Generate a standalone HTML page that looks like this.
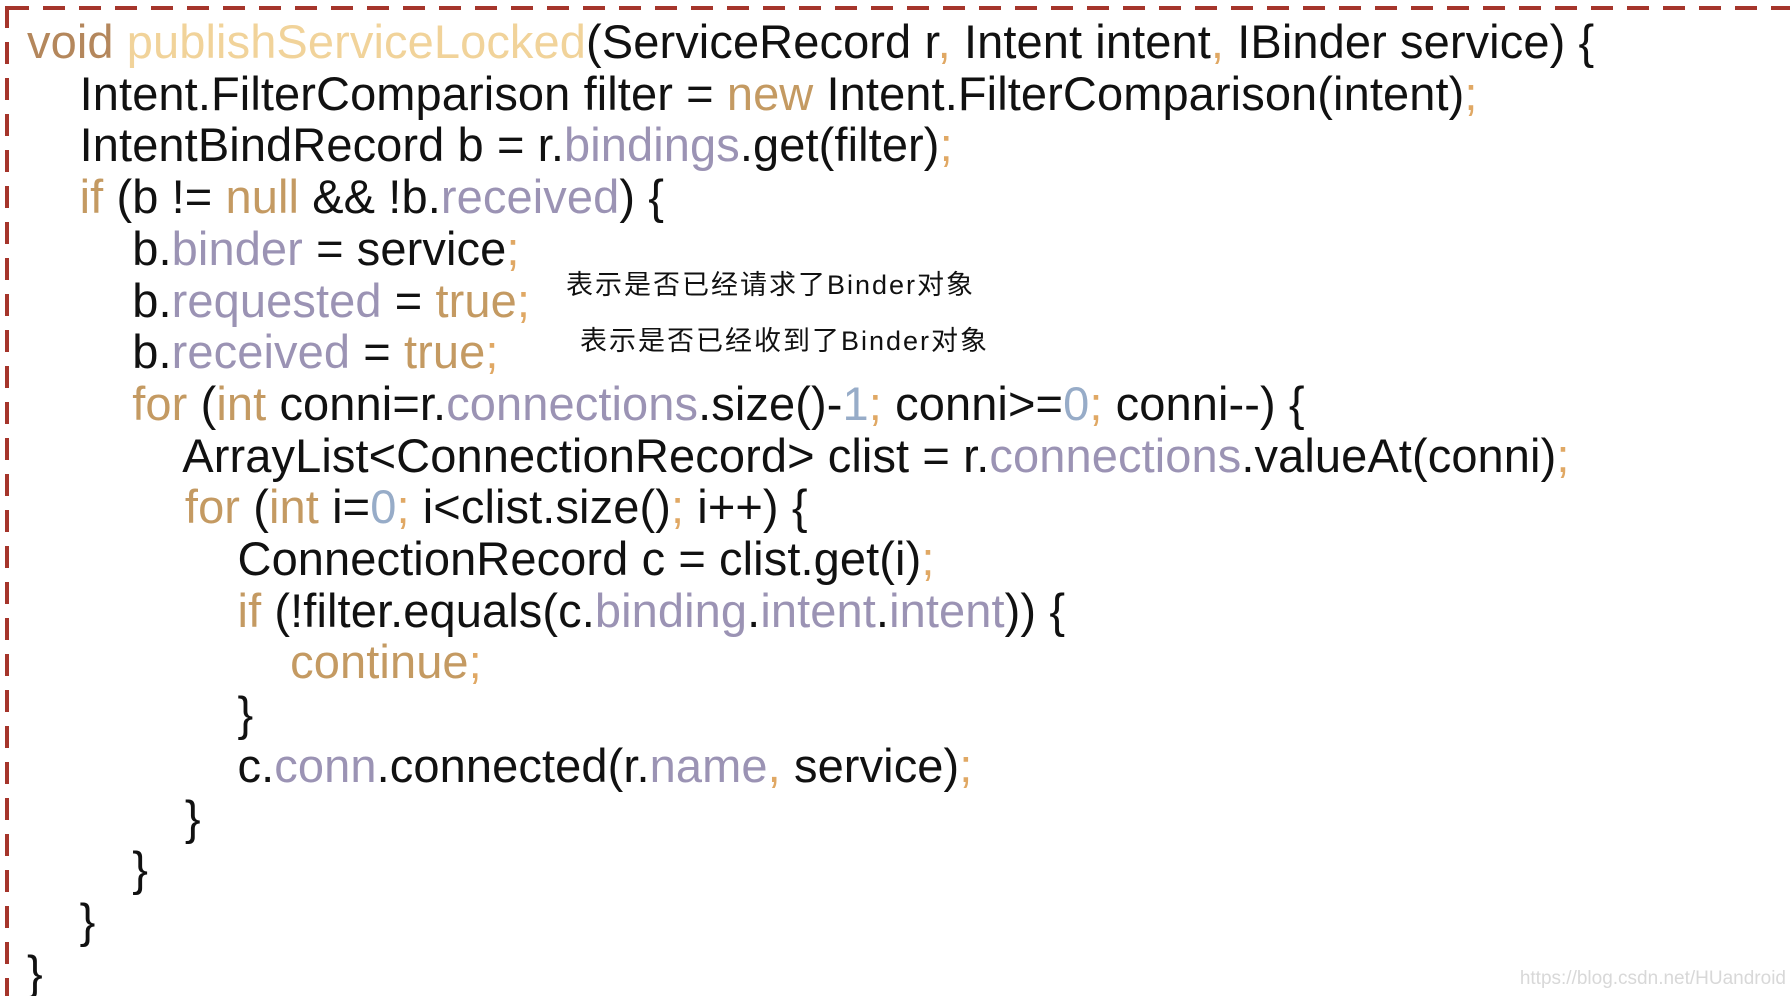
<!DOCTYPE html>
<html><head><meta charset="utf-8"><style>
html,body{margin:0;padding:0;background:#fff;width:1790px;height:996px;overflow:hidden;position:relative}
.bt{position:absolute;left:7px;top:6px;width:1790px;height:4px;background:repeating-linear-gradient(90deg,#a5352b 0 22px,transparent 22px 36px)}
.bl{position:absolute;left:5px;top:6px;width:4px;height:990px;background:repeating-linear-gradient(180deg,#a5352b 0 22px,transparent 22px 36px)}
.code{position:absolute;left:27px;top:16px;font-family:"Liberation Sans",sans-serif;font-size:47px;line-height:51.7px;color:#111;white-space:pre;letter-spacing:0.1px}
.k{color:#c49a62}.v{color:#b4875c}.m{color:#f1d39a}.f{color:#9b93b4}.n{color:#97acc8}.s{color:#e0a864}
.ann{position:absolute;font-family:"Liberation Sans","Noto Sans CJK SC",sans-serif;font-size:27px;color:#111;letter-spacing:2px}
.wm{position:absolute;right:4px;top:968px;font-family:"Liberation Sans",sans-serif;font-size:19px;color:#d8d8d8}
</style></head><body>
<div class="bt"></div><div class="bl"></div>
<div class="code"><span class="v">void</span> <span class="m">publishServiceLocked</span>(ServiceRecord r<span class="s">,</span> Intent intent<span class="s">,</span> IBinder service) {
    Intent.FilterComparison filter = <span class="k">new</span> Intent.FilterComparison(intent)<span class="s">;</span>
    IntentBindRecord b = r.<span class="f">bindings</span>.get(filter)<span class="s">;</span>
    <span class="k">if</span> (b != <span class="k">null</span> &amp;&amp; !b.<span class="f">received</span>) {
        b.<span class="f">binder</span> = service<span class="s">;</span>
        b.<span class="f">requested</span> = <span class="k">true</span><span class="s">;</span>
        b.<span class="f">received</span> = <span class="k">true</span><span class="s">;</span>
        <span class="k">for</span> (<span class="k">int</span> conni=r.<span class="f">connections</span>.size()-<span class="n">1</span><span class="s">;</span> conni&gt;=<span class="n">0</span><span class="s">;</span> conni--) {
            ArrayList&lt;ConnectionRecord&gt; clist = r.<span class="f">connections</span>.valueAt(conni)<span class="s">;</span>
            <span class="k">for</span> (<span class="k">int</span> i=<span class="n">0</span><span class="s">;</span> i&lt;clist.size()<span class="s">;</span> i++) {
                ConnectionRecord c = clist.get(i)<span class="s">;</span>
                <span class="k">if</span> (!filter.equals(c.<span class="f">binding</span>.<span class="f">intent</span>.<span class="f">intent</span>)) {
                    <span class="k">continue</span><span class="s">;</span>
                }
                c.<span class="f">conn</span>.connected(r.<span class="f">name</span><span class="s">,</span> service)<span class="s">;</span>
            }
        }
    }
}</div>
<div class="ann" style="left:566px;top:263px">表示是否已经请求了Binder对象</div>
<div class="ann" style="left:580px;top:319px">表示是否已经收到了Binder对象</div>
<div class="wm">https://blog.csdn.net/HUandroid</div>
</body></html>
